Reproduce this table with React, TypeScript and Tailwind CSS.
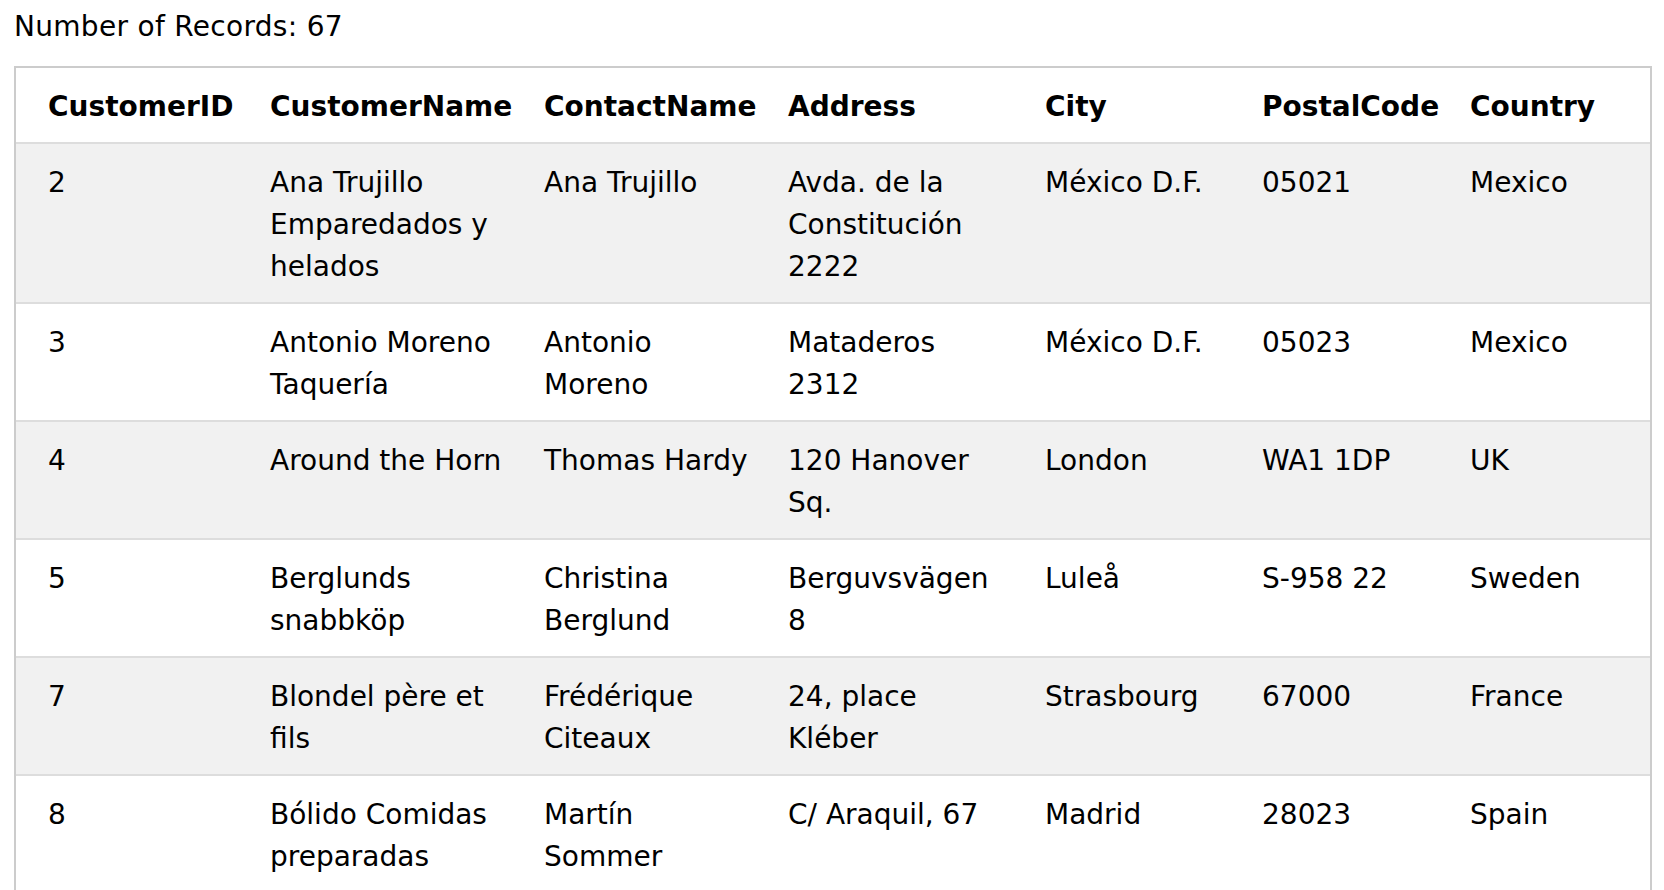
import { FC } from "react";

type Customer = {
  id: number;
  name: string;
  contact: string;
  address: string;
  city: string;
  postal: string;
  country: string;
};

const customers: Customer[] = [
  {
    id: 2,
    name: "Ana Trujillo Emparedados y helados",
    contact: "Ana Trujillo",
    address: "Avda. de la Constitución 2222",
    city: "México D.F.",
    postal: "05021",
    country: "Mexico",
  },
  {
    id: 3,
    name: "Antonio Moreno Taquería",
    contact: "Antonio Moreno",
    address: "Mataderos 2312",
    city: "México D.F.",
    postal: "05023",
    country: "Mexico",
  },
  {
    id: 4,
    name: "Around the Horn",
    contact: "Thomas Hardy",
    address: "120 Hanover Sq.",
    city: "London",
    postal: "WA1 1DP",
    country: "UK",
  },
  {
    id: 5,
    name: "Berglunds snabbköp",
    contact: "Christina Berglund",
    address: "Berguvsvägen 8",
    city: "Luleå",
    postal: "S-958 22",
    country: "Sweden",
  },
  {
    id: 7,
    name: "Blondel père et fils",
    contact: "Frédérique Citeaux",
    address: "24, place Kléber",
    city: "Strasbourg",
    postal: "67000",
    country: "France",
  },
  {
    id: 8,
    name: "Bólido Comidas preparadas",
    contact: "Martín Sommer",
    address: "C/ Araquil, 67",
    city: "Madrid",
    postal: "28023",
    country: "Spain",
  },
];

const headers = [
  "CustomerID",
  "CustomerName",
  "ContactName",
  "Address",
  "City",
  "PostalCode",
  "Country",
];

const cellClass = "align-top pt-[18px] pb-[14px] px-4 first:pl-8";

const App: FC = () => {
  return (
    <div className="min-h-screen bg-white text-black font-['DejaVu_Sans',Verdana,sans-serif] text-[28px] leading-[42px]">
      <div className="pl-[14px] pt-[6px]">
        <p className="mb-[18px] tracking-[0.3px]">Number of Records: 67</p>
        <div className="w-[1638px] border-2 border-[#cccccc]">
          <table className="w-full table-fixed text-left">
            <colgroup>
              <col className="w-[238px]" />
              <col className="w-[274px]" />
              <col className="w-[244px]" />
              <col className="w-[257px]" />
              <col className="w-[217px]" />
              <col className="w-[208px]" />
              <col className="w-[196px]" />
            </colgroup>
            <tbody>
              <tr className="border-b-2 border-[#dddddd] bg-white">
                {headers.map((h) => (
                  <th key={h} className={`${cellClass} font-bold whitespace-nowrap`}>
                    {h}
                  </th>
                ))}
              </tr>
              {customers.map((c, i) => (
                <tr
                  key={c.id}
                  className={
                    i % 2 === 0
                      ? "border-b-2 border-[#dddddd] bg-[#f1f1f1]"
                      : "border-b-2 border-[#dddddd] bg-white"
                  }
                >
                  <td className={cellClass}>{c.id}</td>
                  <td className={cellClass}>{c.name}</td>
                  <td className={cellClass}>{c.contact}</td>
                  <td className={cellClass}>{c.address}</td>
                  <td className={cellClass}>{c.city}</td>
                  <td className={cellClass}>{c.postal}</td>
                  <td className={cellClass}>{c.country}</td>
                </tr>
              ))}
            </tbody>
          </table>
        </div>
      </div>
    </div>
  );
};

export default App;
